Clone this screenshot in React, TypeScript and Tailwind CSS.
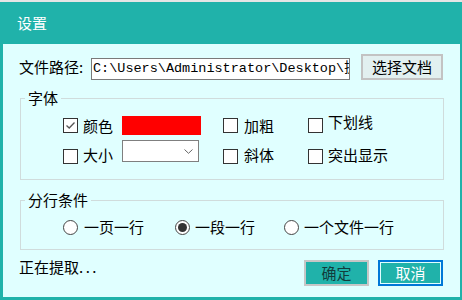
import React from "react";

const font = { fontFamily: '"Noto Sans CJK SC", "Noto Sans", sans-serif' };

function CheckBox({ checked = false }: { checked?: boolean }) {
  return (
    <span className="flex h-[15px] w-[15px] shrink-0 items-center justify-center border border-[#333333] bg-white">
      {checked && (
        <svg width="13" height="13" viewBox="0 0 13 13">
          <path d="M2.5 6.5 L5.2 9 L10.5 3.5" fill="none" stroke="#555555" strokeWidth="1.3" />
        </svg>
      )}
    </span>
  );
}

function Radio({ checked = false }: { checked?: boolean }) {
  return (
    <span className="flex h-[15px] w-[15px] shrink-0 items-center justify-center rounded-full border border-[#444444] bg-white">
      {checked && <span className="h-[9px] w-[9px] rounded-full bg-[#333333]" />}
    </span>
  );
}

export default function App() {
  return (
    <div
      className="flex h-[300px] w-[462px] flex-col border-t-2 border-[#e5e5e5] bg-[#20b2aa] text-[15px] text-black"
      style={font}
    >
      {/* title bar */}
      <div className="flex h-[42px] shrink-0 items-center pl-[17px] text-white">设置</div>

      {/* body */}
      <div className="ml-[3px] mr-[2px] flex h-[253px] flex-col bg-[#e0ffff]">
        {/* path row */}
        <div className="mt-[10px] flex h-[26px] pl-[16px]">
          <span className="w-[72px] self-center leading-[20px]">文件路径:</span>
          <div
            className="h-[22px] w-[259px] self-end overflow-hidden whitespace-nowrap border border-[#7a7a7a] bg-white pl-[1px] text-[13.5px] leading-[20px]"
            style={{ fontFamily: '"Liberation Mono", "Noto Sans CJK SC", monospace' }}
          >
            C:\Users\Administrator\Desktop\提取文件
          </div>
          <button className="ml-[11px] flex h-[26px] w-[82px] items-center justify-center border-2 border-[#c3c3c3] bg-[#e2f0f0] leading-[20px]">
            选择文档
          </button>
        </div>

        {/* 字体 */}
        <fieldset className="ml-[17px] mt-[8px] w-[424px] border border-[#d0dcdc] pb-[15px]">
          <legend className="ml-[4px] px-[3px] leading-[20px]">字体</legend>
          <div className="mt-[5px] grid h-[19px] grid-cols-[160px_85px_1fr] pl-[42px]">
            <div className="flex items-center">
              <CheckBox checked />
              <span className="ml-[5px] leading-[18px]">颜色</span>
              <span className="ml-[9px] h-[19px] w-[79px] bg-[#ff0000]" />
            </div>
            <div className="flex items-center">
              <CheckBox />
              <span className="ml-[6px] leading-[18px]">加粗</span>
            </div>
            <div className="flex items-center">
              <CheckBox />
              <span className="ml-[5px] pb-[7px] leading-[18px]">下划线</span>
            </div>
          </div>
          <div className="mt-[8px] grid h-[24px] grid-cols-[160px_85px_1fr] pl-[42px]">
            <div className="flex items-end">
              <CheckBox />
              <span className="mb-[1px] ml-[5px] leading-[16px]">大小</span>
              <div className="ml-[9px] flex h-[22px] w-[77px] items-center justify-end self-start border border-[#7f7f7f] bg-white pr-[5px]">
                <svg width="9" height="5" viewBox="0 0 9 5">
                  <path d="M0.5 0.5 L4.5 4.3 L8.5 0.5" fill="none" stroke="#666666" strokeWidth="1" />
                </svg>
              </div>
            </div>
            <div className="flex items-end">
              <CheckBox />
              <span className="mb-[1px] ml-[6px] leading-[16px]">斜体</span>
            </div>
            <div className="flex items-end">
              <CheckBox />
              <span className="mb-[1px] ml-[5px] leading-[16px]">突出显示</span>
            </div>
          </div>
        </fieldset>

        {/* 分行条件 */}
        <fieldset className="ml-[17px] mt-[10px] w-[424px] border border-[#d0dcdc] pb-[15px]">
          <legend className="ml-[4px] px-[3px] leading-[20px]">分行条件</legend>
          <div className="mt-[9px] grid h-[15px] grid-cols-[112px_109px_1fr] pl-[42px]">
            <div className="flex items-center">
              <Radio />
              <span className="ml-[6px] leading-[16px]">一页一行</span>
            </div>
            <div className="flex items-center">
              <Radio checked />
              <span className="ml-[5px] leading-[16px]">一段一行</span>
            </div>
            <div className="flex items-center">
              <Radio />
              <span className="ml-[5px] leading-[16px]">一个文件一行</span>
            </div>
          </div>
        </fieldset>

        {/* status + buttons */}
        <div className="mt-[10px] flex h-[26px] pl-[16px] pr-[17px]">
          <span className="leading-[14px]">
            正在提取<span className="tracking-[2.5px]">...</span>
          </span>
          <button className="ml-auto flex h-[26px] w-[65px] items-center justify-center border-2 border-[#c6c6c6] bg-[#20b2aa] leading-[20px] text-[#123c3c]">
            确定
          </button>
          <button className="ml-[9px] h-[26px] w-[65px] border-2 border-[#0078d7]">
            <span className="flex h-full w-full items-center justify-center border border-[#e0ffff] bg-[#20b2aa] leading-[20px] text-white">
              取消
            </span>
          </button>
        </div>
      </div>
    </div>
  );
}
